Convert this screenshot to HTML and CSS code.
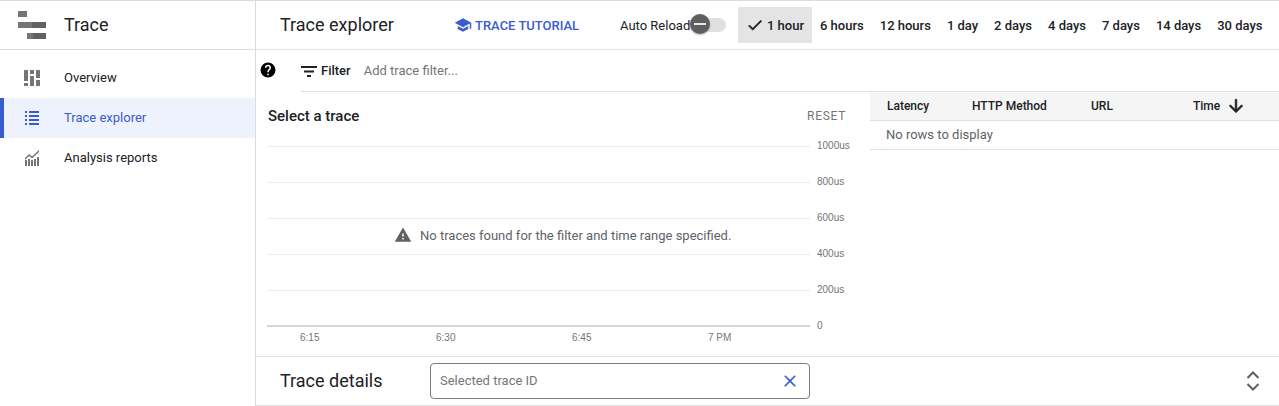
FILE: index.html
```html
<!DOCTYPE html>
<html lang="en">
<head>
<meta charset="utf-8">
<title>Trace explorer</title>
<link rel="stylesheet" href="styles.css">
</head>
<body>
<div class="app">
  <aside class="sidebar">
    <div class="brand">
      <svg class="brand-icon" width="28" height="28" viewBox="0 0 28 28">
        <rect x="0" y="0" width="9" height="6" fill="#757575"/>
        <rect x="0" y="11" width="14" height="6" fill="#757575"/>
        <rect x="14" y="11" width="14" height="6" fill="#616161"/>
        <rect x="9" y="22" width="6" height="6" fill="#757575"/>
        <rect x="15" y="22" width="13" height="6" fill="#616161"/>
      </svg>
      <span class="brand-name">Trace</span>
    </div>
    <nav class="nav">
      <a class="nav-item">
        <svg class="nav-icon" width="16" height="16" viewBox="0 0 16 16" fill="#757575">
          <rect x="0" y="0" width="4" height="11"/><rect x="0" y="13" width="4" height="3"/>
          <rect x="6" y="0" width="4" height="4"/><rect x="6" y="6" width="4" height="10"/>
          <rect x="12" y="0" width="4" height="8"/><rect x="12" y="10" width="4" height="6"/>
        </svg>
        <span>Overview</span>
      </a>
      <a class="nav-item active">
        <svg class="nav-icon" width="16" height="16" viewBox="0 0 16 16" fill="#3b5bd0">
          <rect x="1" y="1" width="2" height="2"/><rect x="5" y="1" width="10" height="2"/>
          <rect x="1" y="5" width="2" height="2"/><rect x="5" y="5" width="10" height="2"/>
          <rect x="1" y="9" width="2" height="2"/><rect x="5" y="9" width="10" height="2"/>
          <rect x="1" y="13" width="2" height="2"/><rect x="5" y="13" width="10" height="2"/>
        </svg>
        <span>Trace explorer</span>
      </a>
      <a class="nav-item">
        <svg class="nav-icon" width="16" height="16" viewBox="0 0 16 16" fill="#757575">
          <rect x="1" y="10" width="2" height="6"/><rect x="4" y="9" width="2" height="7"/>
          <rect x="7" y="10" width="2" height="6"/><rect x="10" y="9" width="2" height="7"/>
          <rect x="13" y="7" width="2" height="9"/>
          <path d="M1 8l4-4 3 2.500L15 0v2L8 8.600 5 6 1 10z"/>
        </svg>
        <span>Analysis reports</span>
      </a>
    </nav>
  </aside>

  <main class="main">
    <header class="topbar">
      <h1 class="page-title">Trace explorer</h1>
      <a class="tutorial">
        <svg width="18" height="18" viewBox="0 0 24 24" fill="#3b5bd0"><path d="M5 13.180v4L12 21l7-3.820v-4L12 17l-7-3.820zM12 3L1 9l11 6 9-4.910V17h2V9L12 3z"/></svg>
        <span>TRACE TUTORIAL</span>
      </a>
      <div class="reload">
        <span class="reload-label">Auto Reload</span>
        <span class="switch"><span class="switch-track"></span><span class="switch-knob"><span class="switch-dash"></span></span></span>
      </div>
      <div class="ranges">
        <button class="range selected">
          <svg width="18" height="18" viewBox="0 0 24 24" fill="#212121" stroke="#212121" stroke-width=".8"><path d="M9 16.200 4.800 12l-1.400 1.400L9 19 21 7l-1.400-1.400z"/></svg>
          <span>1 hour</span>
        </button>
        <button class="range">6 hours</button>
        <button class="range">12 hours</button>
        <button class="range">1 day</button>
        <button class="range">2 days</button>
        <button class="range">4 days</button>
        <button class="range">7 days</button>
        <button class="range">14 days</button>
        <button class="range">30 days</button>
      </div>
    </header>

    <div class="filter-row">
      <svg class="help" width="18" height="18" viewBox="0 0 24 24" fill="#000"><path d="M12 2a10 10 0 1 0 0 20 10 10 0 0 0 0-20zm1 17h-2v-2h2v2zm2.070-7.750-.9.920C13.450 12.900 13 13.500 13 15h-2v-.5c0-1.100.45-2.100 1.170-2.830l1.240-1.260c.37-.36.59-.86.59-1.410 0-1.100-.9-2-2-2s-2 .9-2 2H8a4 4 0 0 1 8 0c0 .88-.36 1.680-.93 2.250z"/></svg>
      <div class="filter-bar">
        <svg width="18" height="18" viewBox="0 0 18 18" fill="#212121"><rect x="0" y="4" width="16" height="2"/><rect x="3" y="8.500" width="10" height="2"/><rect x="6" y="13" width="4" height="2"/></svg>
        <span class="filter-label">Filter</span>
        <span class="filter-placeholder">Add trace filter...</span>
      </div>
    </div>

    <div class="content">
      <section class="chart">
        <div class="chart-head">
          <h2 class="chart-title">Select a trace</h2>
          <span class="reset">RESET</span>
        </div>
        <div class="plot">
          <div class="tick"><span class="line"></span><span class="tick-label">1000us</span></div>
          <div class="tick"><span class="line"></span><span class="tick-label">800us</span></div>
          <div class="tick"><span class="line"></span><span class="tick-label">600us</span></div>
          <div class="tick"><span class="line"></span><span class="tick-label">400us</span></div>
          <div class="tick"><span class="line"></span><span class="tick-label">200us</span></div>
          <div class="tick base"><span class="line"></span><span class="tick-label">0</span></div>
          <div class="empty-note">
            <svg width="18" height="18" viewBox="0 0 24 24" fill="#616161"><path d="M1 21h22L12 2 1 21zm12-3h-2v-2h2v2zm0-4h-2v-4h2v4z"/></svg>
            <span>No traces found for the filter and time range specified.</span>
          </div>
        </div>
        <div class="x-axis">
          <span>6:15</span><span>6:30</span><span>6:45</span><span>7 PM</span>
        </div>
      </section>
      <section class="table">
        <div class="thead">
          <span class="th th-latency">Latency</span>
          <span class="th th-method">HTTP Method</span>
          <span class="th th-url">URL</span>
          <span class="th th-time">Time
            <svg width="20" height="20" viewBox="0 0 24 24" fill="#212121" stroke="#212121" stroke-width=".8"><path d="M20 12l-1.410-1.410L13 16.170V4h-2v12.170l-5.580-5.590L4 12l8 8 8-8z"/></svg>
          </span>
        </div>
        <div class="no-rows">No rows to display</div>
      </section>
    </div>

    <footer class="details">
      <h2 class="details-title">Trace details</h2>
      <div class="trace-input">
        <span class="trace-placeholder">Selected trace ID</span>
        <svg width="20" height="20" viewBox="0 0 24 24" fill="#3b5bd0"><path d="M19 6.410 17.590 5 12 10.590 6.410 5 5 6.410 10.590 12 5 17.590 6.410 19 12 13.410 17.590 19 19 17.590 13.410 12z"/></svg>
      </div>
      <svg class="expand" width="16" height="24" viewBox="0 0 16 24" fill="none" stroke="#616161" stroke-width="2"><path d="M2.500 9 8 3.500 13.500 9M2.500 15 8 20.500 13.500 15"/></svg>
    </footer>
  </main>
</div>
</body>
</html>
```
FILE: styles.css
```css
* { box-sizing: border-box; }
html, body { margin: 0; padding: 0; }
body {
  width: 1279px;
  height: 406px;
  overflow: hidden;
  background: #fff;
  color: #212121;
  font-family: Roboto, "Liberation Sans", sans-serif;
  font-size: 13px;
}
.app {
  display: flex;
  height: 406px;
  border-top: 1px solid #dadce0;
}
.sidebar {
  width: 256px;
  flex: none;
  border-right: 1px solid #dadce0;
}
.brand {
  display: flex;
  align-items: center;
  height: 49px;
  border-bottom: 1px solid #dadce0;
  padding-left: 18px;
}
.brand-icon { margin-right: 18px; }
.brand-name { font-size: 18px; color: #202124; line-height: 20px; }
.nav { padding-top: 8px; }
.nav-item {
  display: flex;
  align-items: center;
  height: 40px;
  padding-left: 24px;
  color: #202124;
  font-size: 13px;
}
.nav-item span { line-height: 16px; }
.nav-icon { margin-right: 24px; flex: none; margin-top: -1px; }
.nav-item.active {
  background: #eef2fc;
  color: #3b5bd0;
  border-left: 4px solid #3b5bd0;
  padding-left: 20px;
}
.main {
  flex: 1;
  min-width: 0;
  display: flex;
  flex-direction: column;
}
.topbar {
  display: flex;
  align-items: center;
  height: 49px;
  padding-left: 24px;
  border-bottom: 1px solid #e0e0e0;
}
.page-title {
  margin: 0 0 2px;
  width: 174px;
  font-size: 18px;
  font-weight: 400;
  color: #202124;
  white-space: nowrap;
}
.tutorial {
  display: flex;
  align-items: center;
  gap: 3px;
  width: 166px;
  color: #3b5bd0;
  font-size: 13px;
  font-weight: 500;
  white-space: nowrap;
}
.reload {
  display: flex;
  align-items: center;
  width: 118px;
}
.reload-label { font-size: 13px; color: #202124; white-space: nowrap; }
.switch { display: block; position: relative; width: 36px; height: 22px; }
.switch-track {
  position: absolute;
  left: 0;
  top: 4px;
  width: 36px;
  height: 14px;
  border-radius: 7px;
  background: #e0e0e0;
}
.switch-knob {
  position: absolute;
  left: 0;
  top: 0;
  width: 20px;
  height: 20px;
  border-radius: 50%;
  background: #5f5f5f;
  box-shadow: 0 1px 2px rgba(0,0,0,.3);
  display: flex;
  align-items: center;
  justify-content: center;
}
.switch-dash { width: 12px; height: 2px; background: #e8e8e8; }
.ranges { display: flex; align-items: center; }
.range {
  display: flex;
  align-items: center;
  height: 36px;
  border: 0;
  background: none;
  padding: 0 8px;
  font: 500 13px Roboto, "Liberation Sans", sans-serif;
  color: #202124;
  white-space: nowrap;
}
.range.selected {
  background: #e4e4e4;
  gap: 3px;
  padding: 0 8px;
  width: 74px;
}
.filter-row {
  display: flex;
  align-items: center;
  height: 42px;
}
.help { margin-left: 3px; flex: none; margin-top: -2px; }
.filter-bar {
  flex: 1;
  display: flex;
  align-items: center;
  height: 42px;
  margin-left: 24px;
  gap: 2px;
  border-bottom: 1px solid #e0e0e0;
}
.filter-label { font-weight: 500; font-size: 13px; color: #202124; }
.filter-placeholder { margin-left: 11px; color: #757575; font-size: 13px; }
.content {
  display: flex;
  height: 265px;
  border-bottom: 1px solid #e0e0e0;
}
.chart { width: 614px; flex: none; padding: 0 0 0 11px; }
.chart-head {
  display: flex;
  align-items: center;
  justify-content: space-between;
  height: 46px;
  padding-top: 2px;
  margin-left: 1px;
  width: 578px;
}
.chart-title { margin: 0; font-size: 15px; font-weight: 500; color: #202124; }
.reset { font-size: 12px; letter-spacing: .7px; color: #757575; }
.plot { position: relative; margin-top: -10px; }
.tick {
  display: flex;
  align-items: center;
  height: 36px;
  margin-top: -1px;
}
.tick + .tick { margin-top: 0; }
.line { width: 543px; height: 1px; background: #ececec; }
.tick.base .line { background: #d6d6d6; height: 2px; }
.tick-label { margin: 0 0 2px 7px; font: 10px "Liberation Sans", Arial, sans-serif; color: #757575; }
.empty-note {
  position: absolute;
  left: 127px;
  top: 98px;
  display: flex;
  align-items: center;
  gap: 8px;
  font-size: 13px;
  color: #5f6368;
  background: #fff;
}
.x-axis {
  display: flex;
  margin-top: -12px;
  padding-left: 33px;
  font: 10px "Liberation Sans", Arial, sans-serif;
  color: #757575;
}
.x-axis span { width: 136px; }
.table { flex: 1; min-width: 0; }
.thead {
  display: flex;
  align-items: center;
  height: 29px;
  background: #f5f5f5;
  border-bottom: 1px solid #e0e0e0;
  font-size: 12px;
  font-weight: 500;
  color: #202124;
}
.th { display: flex; align-items: center; gap: 6px; }
.th-latency { margin-left: 17px; width: 85px; }
.th-method { width: 119px; }
.th-url { width: 102px; }
.no-rows {
  display: flex;
  align-items: center;
  height: 29px;
  padding: 0 0 2px 16px;
  border-bottom: 1px solid #e0e0e0;
  font-size: 13px;
  color: #5f6368;
}
.details {
  display: flex;
  align-items: center;
  height: 49px;
  padding-left: 24px;
  border-bottom: 1px solid #e0e0e0;
}
.details-title { margin: 0 0 2px; width: 150px; font-size: 18px; font-weight: 400; color: #202124; }
.trace-input {
  display: flex;
  align-items: center;
  justify-content: space-between;
  width: 380px;
  height: 36px;
  padding: 0 9px;
  border: 1px solid #757b84;
  border-radius: 4px;
}
.trace-placeholder { font-size: 13px; color: #757575; padding-bottom: 2px; }
.expand { margin-left: auto; margin-right: 18px; }
```
